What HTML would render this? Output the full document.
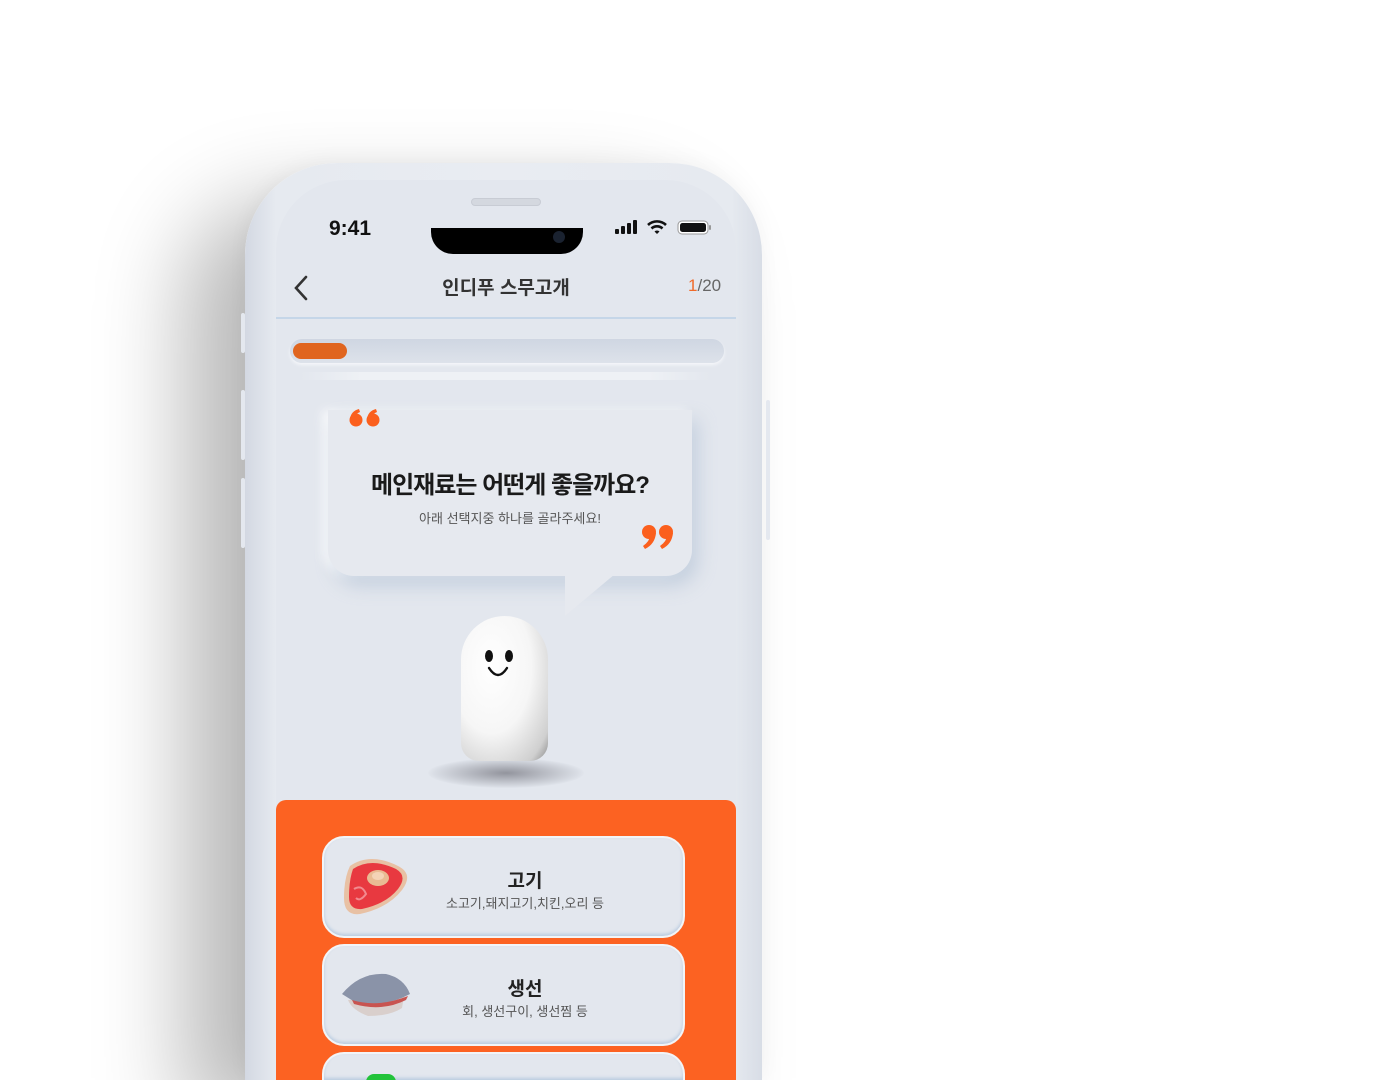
<!DOCTYPE html>
<html style="width:1392px;height:1080px;overflow:hidden"><head><meta charset="utf-8">
<style>
*{margin:0;padding:0;box-sizing:border-box}
body{width:1392px;height:1080px;background:#fff;overflow:hidden;position:relative;font-family:"Liberation Sans","Noto Sans CJK KR",sans-serif}
.phone{position:absolute;left:245px;top:163px;width:517px;height:917px;border-radius:92px 92px 0 0;background:linear-gradient(90deg,#d3d8e2 0%,#e6eaf0 6%,#e9ecf2 50%,#e6eaf0 94%,#d8dde6 100%);box-shadow:-60px 40px 90px rgba(0,0,0,0.28),0 -4px 20px rgba(0,0,0,0.04)}
.btn{position:absolute;width:4px;background:#e4e8ef;border-radius:2px}
.screen{position:absolute;left:276px;top:180px;width:460px;height:900px;border-radius:70px 70px 0 0;background:#e3e7ee;overflow:hidden}
.speaker{position:absolute;left:471px;top:198px;width:70px;height:8px;border-radius:4px;background:#d4d8df;border:1px solid #c8ccd4}
.notch{position:absolute;left:431px;top:228px;width:152px;height:26px;background:#000;border-radius:0 0 22px 22px}
.time{position:absolute;left:329px;top:217px;font-size:21px;font-weight:bold;color:#111}
.title{position:absolute;left:276px;width:460px;top:273px;text-align:center;font-size:19px;font-weight:bold;color:#333}
.count{position:absolute;left:688px;top:276px;font-size:17px;color:#666}
.count b{color:#f06a2a;font-weight:normal}
.hline{position:absolute;left:276px;top:317px;width:460px;height:2px;background:#c5d6e8}
.prog{position:absolute;left:290px;top:339px;width:434px;height:24px;border-radius:12px;background:linear-gradient(#cfd6e2,#dde2ea);box-shadow:0 2px 3px #f5f7fa}
.prog i{position:absolute;left:3px;top:4px;width:54px;height:16px;border-radius:8px;background:#e0651f}
.bubble{position:absolute;left:328px;top:410px;width:364px;height:166px;background:#e6e9ef;border-radius:0 0 26px 26px;box-shadow:6px 10px 18px rgba(160,180,205,0.45),-6px 0 10px rgba(255,255,255,0.8)}
.tail{position:absolute;left:565px;top:574px;width:0;height:0;border-top:42px solid #e6e9ef;border-right:50px solid transparent}
.h1{position:absolute;left:328px;width:364px;top:465px;text-align:center;font-size:24px;font-weight:bold;color:#1a1a1a;letter-spacing:-1px}
.sub{position:absolute;left:328px;width:364px;top:508px;text-align:center;font-size:13px;color:#555}
.ghost{position:absolute;left:461px;top:616px;width:87px;height:145px;border-radius:44px 44px 18px 18px;background:radial-gradient(ellipse at 35% 35%,#fff 0%,#f6f6f6 50%,#cfcfcf 85%,#8a8a8a 100%)}
.shadow{position:absolute;left:428px;top:758px;width:156px;height:30px;border-radius:50%;background:radial-gradient(ellipse,rgba(80,80,90,0.55),rgba(160,165,175,0.15) 65%,transparent 72%)}
.orange{position:absolute;left:276px;top:800px;width:460px;height:280px;background:#fc6222;border-radius:10px 10px 0 0}
.card{position:absolute;left:322px;width:363px;height:102px;border-radius:22px;background:#e3e7ee;border:2px solid #f2f4f7;box-shadow:inset 0 -2px 3px #b9cbe0;overflow:hidden}
.card .t{position:absolute;left:43px;right:0;top:28px;text-align:center;font-size:19px;font-weight:bold;color:#222}
.card .s{position:absolute;left:43px;right:0;top:55px;text-align:center;font-size:13px;color:#555}
</style></head><body>
<div class="phone"></div>
<div class="btn" style="left:241px;top:313px;height:40px"></div>
<div class="btn" style="left:241px;top:390px;height:70px"></div>
<div class="btn" style="left:241px;top:478px;height:70px"></div>
<div class="btn" style="left:766px;top:400px;height:140px"></div>
<div class="screen"></div>
<div class="speaker"></div>
<div class="notch"><div style="position:absolute;right:18px;top:3px;width:12px;height:12px;border-radius:50%;background:#1a2230"></div></div>
<div class="time">9:41</div>
<svg style="position:absolute;left:615px;top:219px" width="96" height="18" viewBox="0 0 96 18">
<rect x="0" y="10" width="4" height="5" rx="1" fill="#111"/><rect x="6" y="7" width="4" height="8" rx="1" fill="#111"/><rect x="12" y="4" width="4" height="11" rx="1" fill="#111"/><rect x="18" y="1" width="4" height="14" rx="1" fill="#111"/>
<path d="M33 6 A13 13 0 0 1 51 6" stroke="#111" stroke-width="2.6" fill="none"/><path d="M36.5 9.5 A8 8 0 0 1 47.5 9.5" stroke="#111" stroke-width="2.6" fill="none"/><path d="M39.5 12.5 L42 15 L44.5 12.5 A3.5 3.5 0 0 0 39.5 12.5Z" fill="#111"/>
<rect x="63" y="2" width="30" height="13" rx="4" fill="#fff" stroke="#999" stroke-width="1"/><rect x="65" y="4" width="26" height="9" rx="2.5" fill="#111"/><rect x="94" y="6" width="2" height="5" rx="1" fill="#999"/>
</svg>
<svg style="position:absolute;left:292px;top:274px" width="18" height="28"><path d="M14 3 L4 14 L14 25" stroke="#333" stroke-width="2.6" fill="none" stroke-linecap="round"/></svg>
<div class="title">인디푸 스무고개</div>
<div class="count"><b>1</b>/20</div>
<div class="hline"></div>
<div class="prog"><i></i></div>
<div style="position:absolute;left:300px;top:372px;width:410px;height:8px;background:linear-gradient(90deg,transparent,#eef1f5 15%,#eef1f5 85%,transparent)"></div>
<div class="bubble"></div>
<div class="tail"></div>
<svg style="position:absolute;left:348px;top:409px" width="34" height="18" viewBox="0 0 34 18"><circle cx="8" cy="11" r="6.5" fill="#fb5f1d"/><path d="M2 10 Q3 2 11 0 L12 3 Q7 5 6 9Z" fill="#fb5f1d"/><circle cx="25" cy="11" r="6.5" fill="#fb5f1d"/><path d="M19 10 Q20 2 28 0 L29 3 Q24 5 23 9Z" fill="#fb5f1d"/></svg>
<svg style="position:absolute;left:641px;top:524px" width="34" height="26" viewBox="0 0 34 26"><circle cx="8" cy="8" r="7" fill="#fb5f1d"/><path d="M15 9 Q14 20 4 25 L2 22 Q9 17 9 11Z" fill="#fb5f1d"/><circle cx="25" cy="8" r="7" fill="#fb5f1d"/><path d="M32 9 Q31 20 21 25 L19 22 Q26 17 26 11Z" fill="#fb5f1d"/></svg>
<div class="h1">메인재료는 어떤게 좋을까요?</div>
<div class="sub">아래 선택지중 하나를 골라주세요!</div>
<div class="shadow"></div>
<div class="ghost">
<div style="position:absolute;left:24px;top:34px;width:8px;height:12px;border-radius:50%;background:#111"></div>
<div style="position:absolute;left:44px;top:34px;width:8px;height:12px;border-radius:50%;background:#111"></div>
<svg style="position:absolute;left:26px;top:50px" width="22" height="14"><path d="M2 2 Q11 16 20 2" stroke="#111" stroke-width="2.4" fill="none" stroke-linecap="round"/></svg>
</div>
<div class="orange"></div>
<div class="card" style="top:836px">
<svg style="position:absolute;left:16px;top:16px" width="72" height="64" viewBox="0 0 72 64"><path d="M10 12 Q30 -2 58 12 Q74 20 62 36 Q48 54 20 60 Q4 62 4 44 Q4 24 10 12Z" fill="#e8c1a4"/><path d="M13 15 Q31 3 56 15 Q68 22 58 35 Q46 50 22 55 Q9 56 9 43 Q9 26 13 15Z" fill="#e83940"/><ellipse cx="38" cy="24" rx="11" ry="8" fill="#e9bb93"/><ellipse cx="38" cy="22" rx="6" ry="4" fill="#f4d3b6"/><path d="M14 35 Q22 30 26 40 Q20 48 16 44" stroke="#f28a8f" stroke-width="2" fill="none"/></svg>
<div class="t">고기</div><div class="s">소고기,돼지고기,치킨,오리 등</div></div>
<div class="card" style="top:944px">
<svg style="position:absolute;left:14px;top:24px" width="76" height="52" viewBox="0 0 76 52"><path d="M10 30 Q14 40 30 46 Q52 46 64 38 L66 26 Z" fill="#d9cfcc"/><path d="M4 24 Q22 2 48 4 Q66 8 72 24 Q50 36 20 34 Z" fill="#8a93a8"/><path d="M14 30 Q40 38 70 26 L68 30 Q44 42 16 34Z" fill="#c85450"/></svg>
<div class="t">생선</div><div class="s">회, 생선구이, 생선찜 등</div></div>
<div class="card" style="top:1052px;height:28px;border-radius:22px 22px 0 0;border-bottom:0">
<div style="position:absolute;left:42px;top:20px;width:30px;height:8px;border-radius:15px 15px 0 0;background:#22c33a"></div></div>
</body></html>
